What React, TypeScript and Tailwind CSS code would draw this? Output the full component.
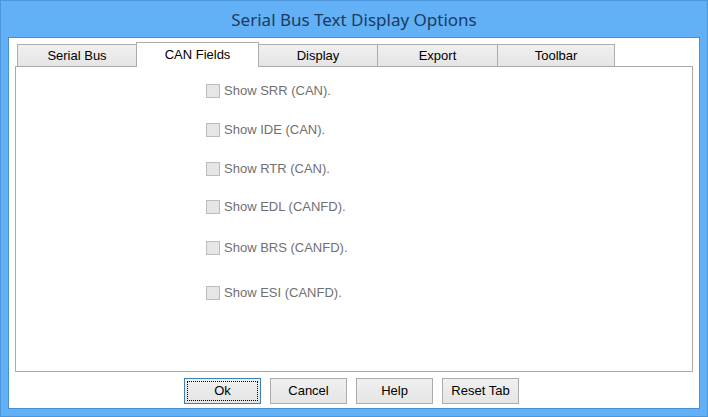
import React from "react";

const tabs = [
  { label: "Serial Bus", w: "w-[120px]" },
  { label: "CAN Fields", w: "w-[123px]", active: true },
  { label: "Display", w: "w-[120px]" },
  { label: "Export", w: "w-[121px]" },
  { label: "Toolbar", w: "w-[118px]" },
];

const rows = [
  { label: "Show SRR (CAN).", mt: "mt-[16px]" },
  { label: "Show IDE (CAN).", mt: "mt-[23px]" },
  { label: "Show RTR (CAN).", mt: "mt-[23px]" },
  { label: "Show EDL (CANFD).", mt: "mt-[22px]" },
  { label: "Show BRS (CANFD).", mt: "mt-[25px]" },
  { label: "Show ESI (CANFD).", mt: "mt-[29px]" },
];

function Btn({ label, focus }: { label: string; focus?: boolean }) {
  return (
    <div
      className={
        "relative w-[77px] h-[26px] flex items-center justify-center bg-gradient-to-b from-[#f0f0f0] to-[#e5e5e5] border text-[13px] text-black " +
        (focus ? "border-[#3c7fb1]" : "border-[#acacac]")
      }
    >
      {focus && (
        <div className="absolute inset-[2px] border border-dotted border-black" />
      )}
      <span className="relative">{label}</span>
    </div>
  );
}

export default function App() {
  return (
    <div
      className="w-[708px] h-[417px] bg-[#62b0f6] border border-[#4d96dc] flex flex-col"
      style={{ fontFamily: '"Liberation Sans", Arial, sans-serif' }}
    >
      <div
        className="h-[36px] flex items-center justify-center text-[17px] text-[#1b3b60] pt-[2px]"
        style={{ fontFamily: '"Noto Sans", "Open Sans", sans-serif' }}
      >
        Serial Bus Text Display Options
      </div>
      <div className="flex-1 mx-[7px] mb-[7px] border border-[#4a8fd2] bg-white flex flex-col pl-[6px] pr-[6px] pt-[3px]">
        <div className="flex items-end h-[25px] pl-[2px]">
          {tabs.map((t, i) =>
            t.active ? (
              <div
                key={i}
                className={
                  t.w +
                  " relative z-10 -ml-px h-[25px] -mb-px bg-white border-t border-l border-r border-[#acacac] flex items-start justify-center pt-[2px] text-[13px] text-black"
                }
              >
                {t.label}
              </div>
            ) : (
              <div
                key={i}
                className={
                  t.w +
                  (i > 0 ? " -ml-px" : "") +
                  " h-[22px] bg-gradient-to-b from-[#f0f0f0] to-[#e5e5e5] border-t border-l border-r border-[#acacac] flex items-center justify-center text-[13px] text-black"
                }
              >
                {t.label}
              </div>
            )
          )}
        </div>
        <div className="w-[678px] h-[306px] border border-[#acacac] flex flex-col pl-[190px]">
          {rows.map((r, i) => (
            <div key={i} className={r.mt + " flex items-center h-[16px]"}>
              <div className="w-[14px] h-[14px] border border-[#bcbcbc] bg-[#e6e6e6]" />
              <span className="ml-[4px] text-[13px] text-[#707070]">{r.label}</span>
            </div>
          ))}
        </div>
        <div className="flex pl-[169px] gap-[9px] mt-[6px]">
          <Btn label="Ok" focus />
          <Btn label="Cancel" />
          <Btn label="Help" />
          <Btn label="Reset Tab" />
        </div>
      </div>
    </div>
  );
}
